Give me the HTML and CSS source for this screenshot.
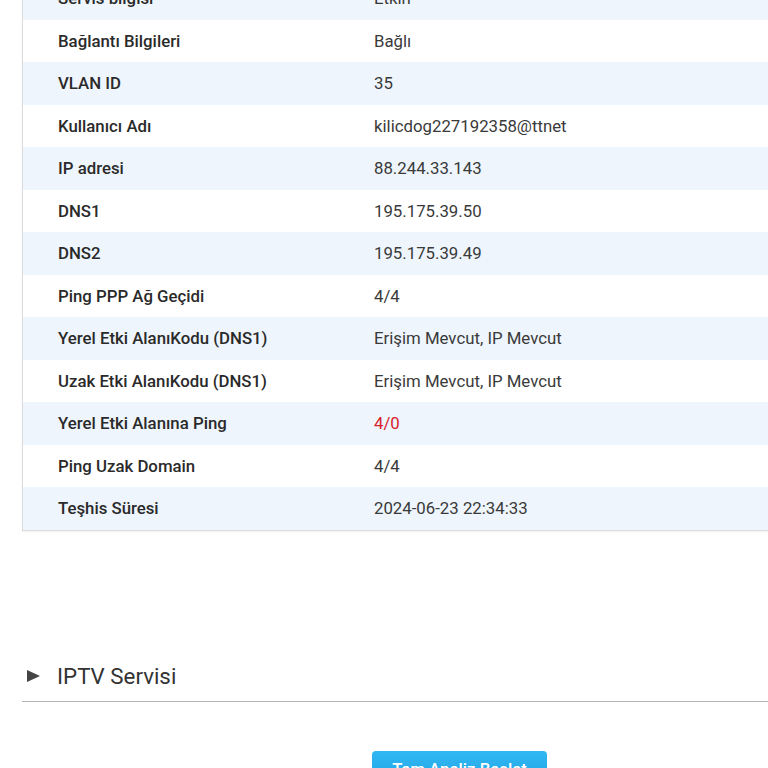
FILE: index.html
```html
<!DOCTYPE html>
<html lang="tr">
<head>
<meta charset="utf-8">
<link rel="stylesheet" href="styles.css">
</head>
<body>
<div class="page">
  <div class="info-table">
    <div class="row alt"><div class="label">Servis bilgisi</div><div class="value">Etkin</div></div>
    <div class="row"><div class="label">Bağlantı Bilgileri</div><div class="value">Bağlı</div></div>
    <div class="row alt"><div class="label">VLAN ID</div><div class="value">35</div></div>
    <div class="row"><div class="label">Kullanıcı Adı</div><div class="value">kilicdog227192358@ttnet</div></div>
    <div class="row alt"><div class="label">IP adresi</div><div class="value">88.244.33.143</div></div>
    <div class="row"><div class="label">DNS1</div><div class="value">195.175.39.50</div></div>
    <div class="row alt"><div class="label">DNS2</div><div class="value">195.175.39.49</div></div>
    <div class="row"><div class="label">Ping PPP Ağ Geçidi</div><div class="value">4/4</div></div>
    <div class="row alt"><div class="label">Yerel Etki AlanıKodu (DNS1)</div><div class="value">Erişim Mevcut, IP Mevcut</div></div>
    <div class="row"><div class="label">Uzak Etki AlanıKodu (DNS1)</div><div class="value">Erişim Mevcut, IP Mevcut</div></div>
    <div class="row alt"><div class="label">Yerel Etki Alanına Ping</div><div class="value error">4/0</div></div>
    <div class="row"><div class="label">Ping Uzak Domain</div><div class="value">4/4</div></div>
    <div class="row alt"><div class="label">Teşhis Süresi</div><div class="value">2024-06-23 22:34:33</div></div>
  </div>

  <div class="section">
    <span class="arrow"></span>
    <span class="section-title">IPTV Servisi</span>
  </div>

  <div class="actions">
    <button class="btn">Tam Analiz Başlat</button>
  </div>
</div>
</body>
</html>
```

FILE: styles.css
```css
html, body {
  margin: 0;
  padding: 0;
  background: #ffffff;
  overflow: hidden;
}

.page {
  font-family: Roboto, "Noto Sans", "Liberation Sans", sans-serif;
  color: #333333;
  margin-top: -23px;
  padding-left: 22px;
}

.info-table {
  border-left: 1px solid #dcdcdc;
  border-bottom: 1px solid #dcdcdc;
  box-shadow: 0 1px 2px rgba(0, 0, 0, 0.06);
}

.row {
  display: grid;
  grid-template-columns: 351px 1fr;
  align-items: center;
  height: 42.5px;
  background: #ffffff;
}

.row.alt {
  background: #eef5fc;
}

.label {
  padding-left: 35px;
  font-size: 16.8px;
  font-weight: 500;
  color: #2a2a2a;
}

.value {
  font-size: 16.8px;
  font-weight: 400;
  color: #3a3a3a;
}

.value.error {
  color: #d8202a;
}

.section {
  margin-top: 132px;
  display: flex;
  align-items: center;
  gap: 17px;
  padding: 0 0 12px 5px;
  border-bottom: 1px solid #b4b4b4;
}

.arrow {
  width: 0;
  height: 0;
  border-top: 6.5px solid transparent;
  border-bottom: 6.5px solid transparent;
  border-left: 13px solid #444444;
}

.section-title {
  font-size: 22.3px;
  font-weight: 400;
  color: #333333;
}

.actions {
  padding-top: 49px;
  padding-left: 350px;
}

.btn {
  width: 175px;
  height: 36px;
  border: none;
  border-radius: 4px;
  background: linear-gradient(#30b8f2, #1ea3e6);
  color: #ffffff;
  font-family: Roboto, "Noto Sans", "Liberation Sans", sans-serif;
  font-size: 16.8px;
  font-weight: 500;
  padding: 0;
}
```
